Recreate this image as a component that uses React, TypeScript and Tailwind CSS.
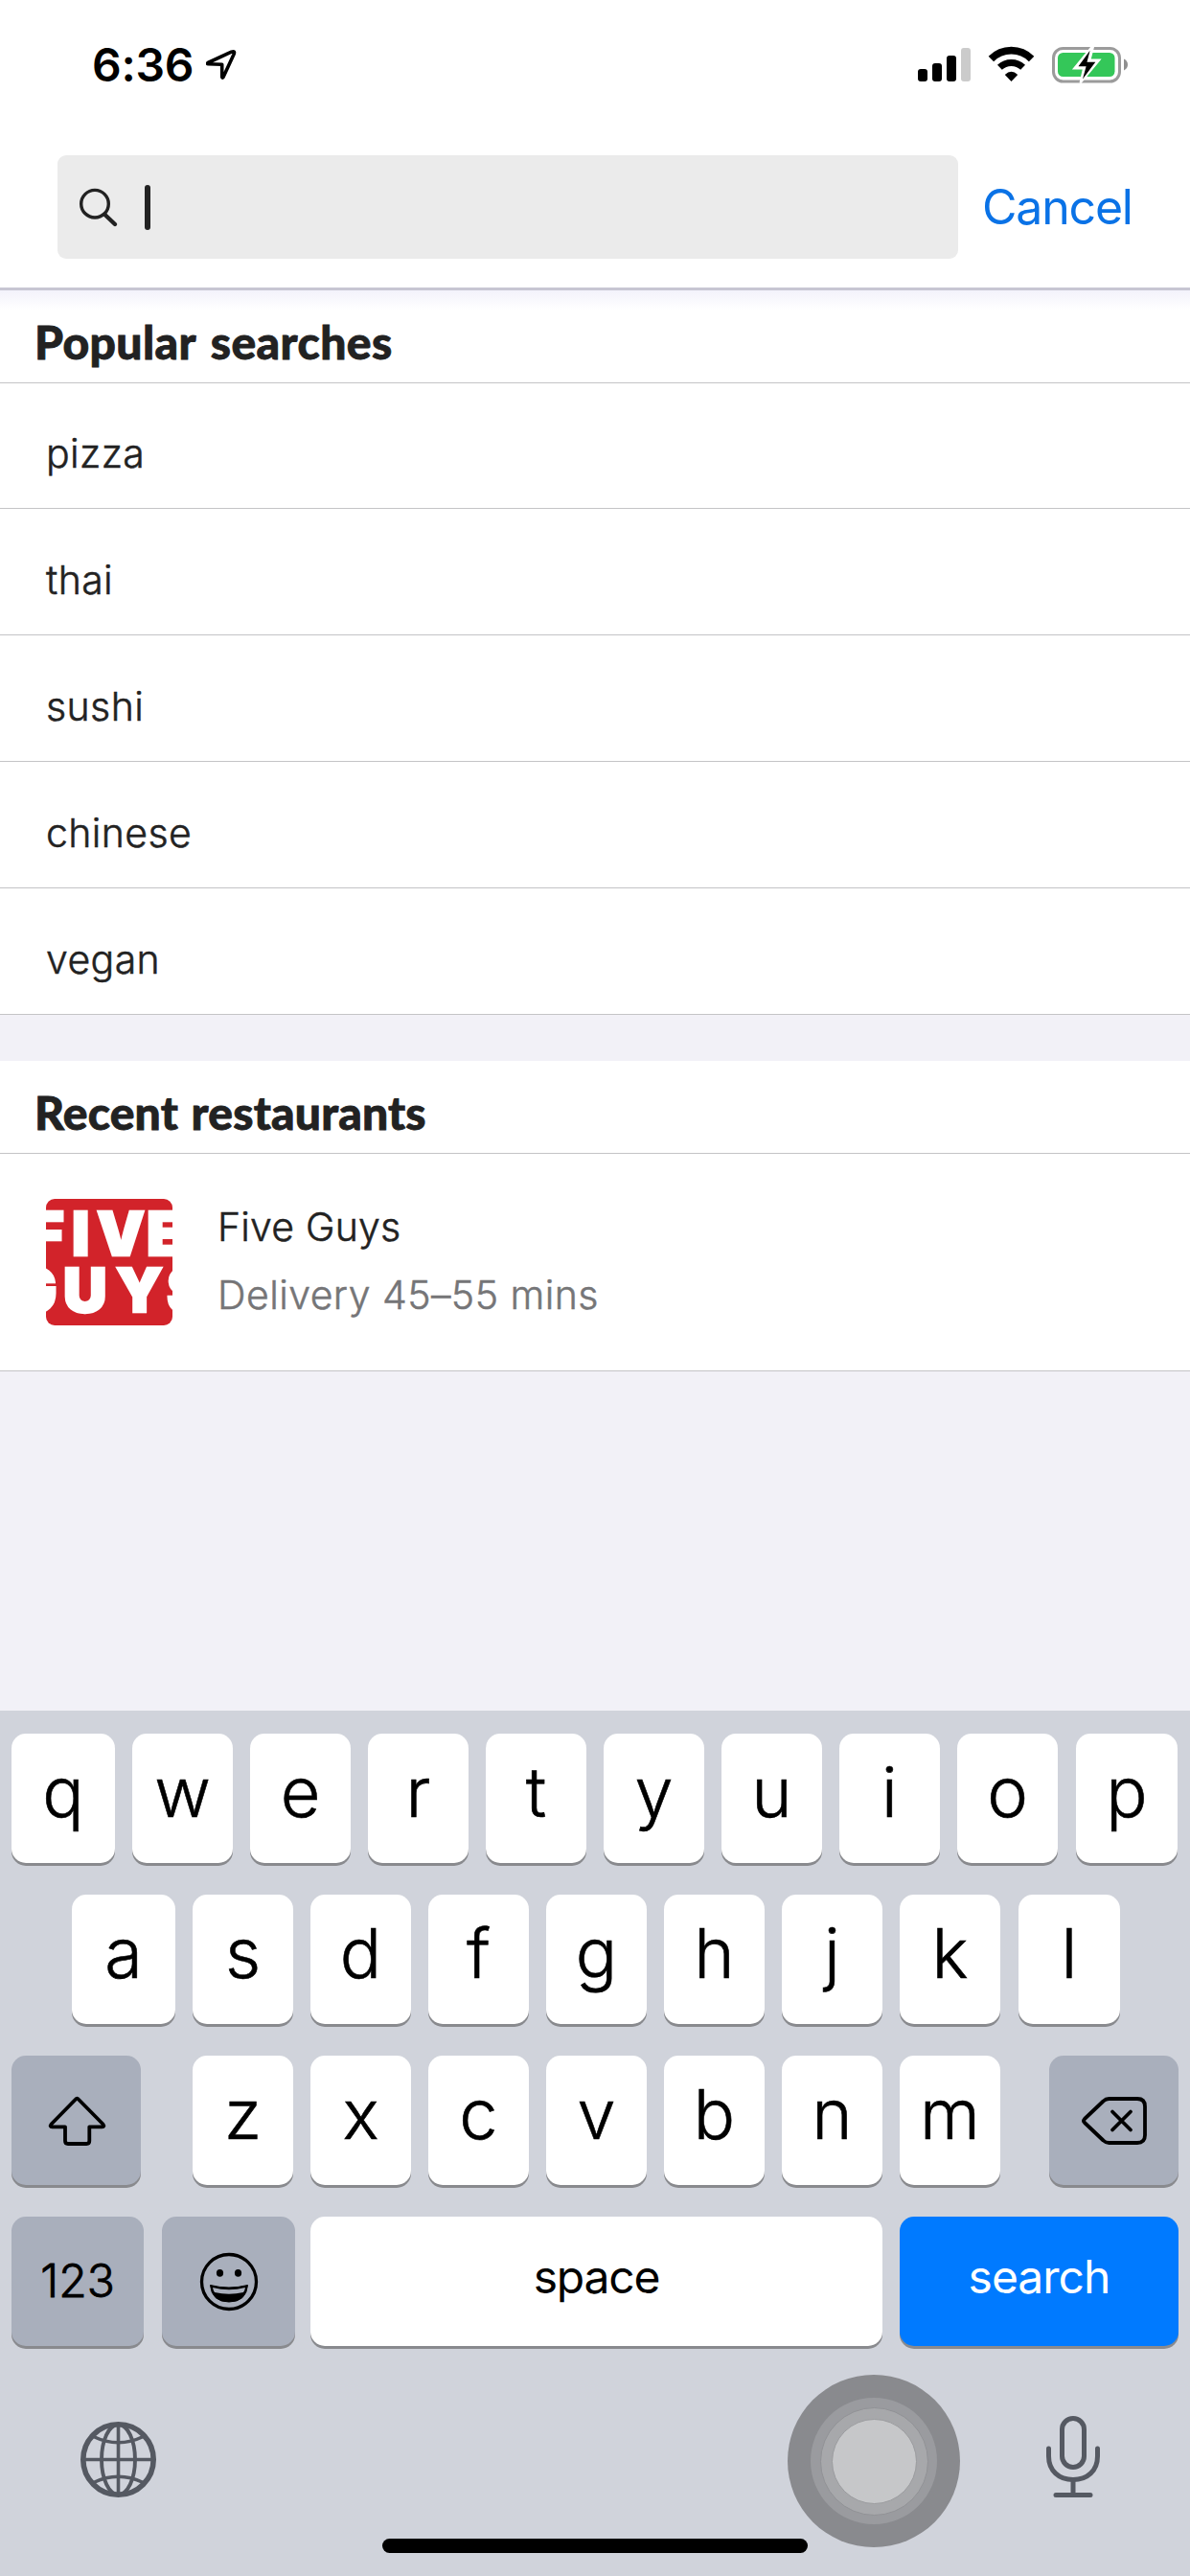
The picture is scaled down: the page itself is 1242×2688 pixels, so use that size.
import type { ReactNode } from "react";

const popular = ["pizza", "thai", "sushi", "chinese", "vegan"];

function StatusBar() {
  return (
    <div className="flex h-[162px] shrink-0 items-start justify-between pl-24 pr-16">
      <div className="flex">
        <span className="mt-[39px] w-[119px] text-[48px] leading-[58px] font-semibold tracking-[-0.3px] text-black">6:36</span>
        <svg className="mt-[48px]" width="36" height="40" viewBox="215 48 36 40" fill="none">
          <path d="M217 65.5 L241.5 54.2 Q245.8 52.6 244 56.8 L233 80.5 Q232 82 231.7 80 V67.3 L217.5 66.8 Q215.5 66.3 217 65.5 Z" stroke="#000" strokeWidth="3.6" strokeLinejoin="round" />
        </svg>
      </div>
      <svg className="mt-[44px]" width="224" height="46" viewBox="954 44 224 46" fill="none">
        <rect x="958" y="72" width="10" height="13" rx="3" fill="#000" />
        <rect x="973" y="66" width="10" height="19" rx="3" fill="#000" />
        <rect x="988" y="58" width="10" height="27" rx="3" fill="#000" />
        <rect x="1003" y="50" width="10" height="35" rx="3" fill="#cbcbcb" />
        <path d="M1034.400 61.5 A29.5 29.5 0 0 1 1076.600 61.5" stroke="#000" strokeWidth="7.6" />
        <path d="M1043.4 70.2 A17.6 17.6 0 0 1 1067.6 70.2" stroke="#000" strokeWidth="7" />
        <path d="M1055.5 85 L1048.8 78 Q1055.500 71.500 1062.200 78 Z" fill="#000" />
        <rect x="1099.500" y="50.500" width="69" height="34.500" rx="10" stroke="#9b9b9b" strokeWidth="3" />
        <rect x="1104" y="55" width="59.500" height="25" rx="5.500" fill="#34c759" />
        <path d="M1173 61.500 Q1177 63.500 1177 67.300 Q1177 71.500 1173 73.500 Z" fill="#8f8f8f" />
        <path d="M1139.500 49 L1121 71.500 H1131 L1127.500 86.500 L1147.500 62.500 H1137.500 L1141 49 Z" fill="#fff" stroke="#fff" strokeWidth="2" />
        <path d="M1137.600 52.800 L1125.500 69.300 H1133.600 L1130 82.500 L1143.300 64.700 H1134.500 Z" fill="#000" />
      </svg>
    </div>
  );
}

function SearchHeader() {
  return (
    <div className="flex h-[141px] shrink-0 items-start border-b-[3px] border-[#c7c6d3] pl-[60px]">
      <div className="flex h-[108px] w-[940px] items-center rounded-[9px] bg-[#ebebeb] pl-[21px]">
        <svg width="44" height="44" viewBox="81 194 44 44" fill="none" stroke="#222">
          <circle cx="99" cy="212.700" r="14.300" strokeWidth="3.400" />
          <path d="M109.500 224 L120 234" strokeWidth="4.400" strokeLinecap="round" />
        </svg>
        <span className="ml-[26px] h-[47px] w-[6px] rounded-full bg-[#222]" />
      </div>
      <span className="ml-[25px] text-[50px] leading-[108px] tracking-[-1.2px] text-[#0a72e6]">Cancel</span>
    </div>
  );
}

function SectionTitle({ children, className }: { children: ReactNode; className: string }) {
  return (
    <h2 className={`h-[97px] border-b border-[#c4c4c6] pl-[36px] font-['Lato',sans-serif] text-[48px] leading-[108px] font-black text-[#222] [-webkit-text-stroke:0.8px_#222] ${className}`}>
      {children}
    </h2>
  );
}

function FiveGuysLogo() {
  return (
    <svg className="shrink-0 overflow-hidden rounded-[9px] bg-[#d2232a]" width="132" height="132" viewBox="0 0 132 132">
      <g fill="#fff" stroke="#fff" strokeWidth="2.5" fontFamily="Inter, sans-serif" fontWeight="900" fontSize="63">
        <text y="58.500" x="-18 27 53 105">FIVE</text>
        <text y="117.500" x="-36 18 73 126">GUYS</text>
      </g>
    </svg>
  );
}

function Key({ children, className }: { children: ReactNode; className: string }) {
  return (
    <div className={`flex h-[135px] shrink-0 items-center justify-center rounded-[15px] shadow-[0_3px_0_#898a8e] ${className}`}>
      {children}
    </div>
  );
}

function LetterKeys({ letters }: { letters: string }) {
  return (
    <>
      {letters.split("").map((l) => (
        <Key key={l} className={`bg-white pb-[14px] text-[72px] font-light text-black [-webkit-text-stroke:0.6px_#000] ${l === "q" || l === "a" ? "w-[108px]" : l === "p" || l === "l" ? "ml-px w-[106px]" : "w-[105px]"}`}>
          {l}
        </Key>
      ))}
    </>
  );
}

function Keyboard() {
  return (
    <div className="relative mt-auto flex h-[903px] shrink-0 flex-col bg-[#d0d3db] pt-[24px]">
      <div className="flex flex-col gap-[33px]">
        <div className="flex gap-[18px] pl-3"><LetterKeys letters="qwertyuiop" /></div>
        <div className="flex gap-[18px] pl-[75px]"><LetterKeys letters="asdfghjkl" /></div>
        <div className="flex justify-between px-3">
          <Key className="w-[135px] bg-[#a9afbc]">
            <svg width="64" height="58" viewBox="49 2185 64 58" fill="none" stroke="#000" strokeWidth="3.800" strokeLinejoin="round">
              <path d="M80 2191.500 Q81.400 2189.800 82.800 2191.500 L108.500 2217.500 Q110.500 2220.300 107.500 2220.300 H94.300 V2235 Q94.300 2238 91.300 2238 H72 Q69 2238 69 2235 V2220.300 H55.500 Q52.500 2220.300 54.500 2217.500 Z" />
            </svg>
          </Key>
          <div className="flex gap-[18px] pl-[3px]"><LetterKeys letters="zxcvbnm" /></div>
          <Key className="w-[135px] bg-[#a9afbc]">
            <svg width="72" height="56" viewBox="1127 2186 72 56" fill="none" stroke="#000" strokeWidth="3.800" strokeLinecap="round" strokeLinejoin="round">
              <path d="M1157.500 2191 H1187 Q1195 2191 1195 2199 V2229 Q1195 2237 1187 2237 H1157.500 Q1154 2237 1151.500 2234.500 L1132 2216 Q1130 2214 1132 2212 L1151.500 2193.500 Q1154 2191 1157.500 2191 Z" />
              <path d="M1161 2204.500 L1180 2223.500 M1180 2204.500 L1161 2223.500" />
            </svg>
          </Key>
        </div>
        <div className="flex pl-3">
          <Key className="w-[138px] bg-[#a9afbc] pb-px text-[48px] font-light text-black [-webkit-text-stroke:0.8px_#000]">123</Key>
          <Key className="ml-[19px] w-[139px] bg-[#a9afbc]">
            <svg width="64" height="64" viewBox="0 0 64 64" fill="none" stroke="#000">
              <circle cx="32" cy="32" r="28.500" strokeWidth="3.300" />
              <ellipse cx="22.500" cy="22.800" rx="3.600" ry="3.900" fill="#000" stroke="none" />
              <ellipse cx="41.500" cy="22.800" rx="3.600" ry="3.900" fill="#000" stroke="none" />
              <path d="M12.500 35.500 Q32 40.500 51.500 35.500 Q50 53 32 53 Q14 53 12.500 35.500 Z" fill="#000" />
              <path d="M15 38 Q32 42.500 49 38 Q48.500 41 47 43 Q32 46.500 17 43 Q15.500 41 15 38 Z" fill="#a9afbc" stroke="none" />
            </svg>
          </Key>
          <Key className="ml-4 w-[597px] bg-white pb-[10px] text-[48px] tracking-[-1.2px] text-black">space</Key>
          <Key className="ml-[18px] w-[291px] bg-[#007aff] pb-[10px] text-[48px] tracking-[-1px] text-white">search</Key>
        </div>
      </div>
      <div className="flex grow items-start justify-between pt-[69px] pr-[90px] pl-[83px]">
        <svg className="mt-[9px]" width="81" height="81" viewBox="0 0 81 81" fill="none" stroke="#555962">
          <circle cx="40.500" cy="40.500" r="36.700" strokeWidth="5.600" />
          <ellipse cx="40.500" cy="40.500" rx="17.500" ry="36.500" strokeWidth="3.900" />
          <path d="M40.500 4 V77 M4 40.500 H77" strokeWidth="3.600" />
          <path d="M14.500 16.500 Q40.500 29 66.500 16.500 M14.500 64.500 Q40.500 52 66.500 64.500" strokeWidth="3.600" />
        </svg>
        <svg width="64" height="92" viewBox="1088 2517 64 92" fill="none" stroke="#555962" strokeWidth="5" strokeLinecap="round">
          <rect x="1108.500" y="2523.500" width="23" height="51" rx="11.500" />
          <path d="M1094.500 2555 V2563 C1094.500 2578 1105 2587.500 1120 2587.500 S1145.500 2578 1145.500 2563 V2555" />
          <path d="M1120 2588 V2603 M1102 2603.500 H1138" />
        </svg>
      </div>
      <div className="absolute bottom-[30px] left-[822px] flex size-[180px] items-center justify-center rounded-full bg-[#898a8e]">
        <div className="flex size-[132px] items-center justify-center rounded-full bg-[#9a9b9f]">
          <div className="flex size-[113px] items-center justify-center rounded-full border border-[#919296] bg-[#a7a8ab]">
            <div className="size-[89px] rounded-full border-[1.500px] border-[#9b9c9f] bg-[#c6c7c9]" />
          </div>
        </div>
      </div>
      <div className="absolute bottom-6 left-[399px] h-[15px] w-[444px] rounded-full bg-black" />
    </div>
  );
}

export default function App() {
  return (
    <div className="flex h-[2688px] w-[1242px] flex-col overflow-hidden bg-[#f2f1f7] font-['Inter',sans-serif]">
      <div className="bg-white">
        <StatusBar />
        <SearchHeader />
        <div className="bg-linear-to-b from-[#f3f2fb] to-white to-[20px]">
          <SectionTitle className="tracking-[0.400px] [word-spacing:4px]">Popular searches</SectionTitle>
        </div>
        {popular.map((term, i) => (
          <div key={term} className={`border-b border-[#c4c4c6] pl-12 text-[41px] font-light tracking-[0.400px] text-[#222] [-webkit-text-stroke:0.5px_#222] ${i === 0 ? "h-[131px] leading-[147px]" : "h-[132px] leading-[149px]"}`}>
            {term}
          </div>
        ))}
      </div>
      <div className="mt-12 bg-white">
        <SectionTitle className="tracking-[0.200px] [word-spacing:2px]">Recent restaurants</SectionTitle>
        <div className="flex h-[227px] border-b border-[#c4c4c6] pt-[47px] pl-12">
          <FiveGuysLogo />
          <div className="ml-[47px] text-[41px] leading-[71px] font-light">
            <div className="-mt-[6px] tracking-[0.200px] text-[#222] [-webkit-text-stroke:0.5px_#222]">Five Guys</div>
            <div className="tracking-[0.450px] text-[#757577] [-webkit-text-stroke:0.5px_#757577]">Delivery 45–55 mins</div>
          </div>
        </div>
      </div>
      <Keyboard />
    </div>
  );
}
